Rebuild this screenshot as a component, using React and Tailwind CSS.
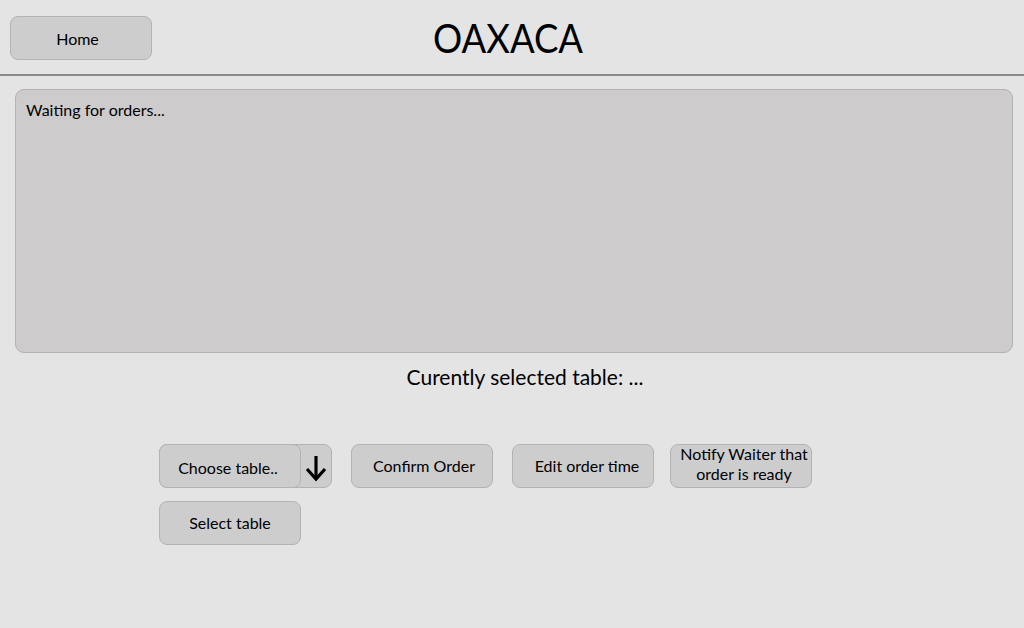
export default function App() {
  const btn =
    'h-[44px] w-[142px] rounded-[8px] border border-[#b3b3b3] bg-[#cecdce] text-[16px] text-black leading-[20px] flex items-center justify-center text-center';

  return (
    <div
      className="w-[1024px] h-[628px] bg-[#e4e4e4] text-black overflow-hidden"
      style={{ fontFamily: 'Lato, "Open Sans", sans-serif' }}
    >
      <header className="relative h-[76px] border-b-2 border-[#8a8a8a]">
        <div className="flex items-start pt-[16px] pl-[10px]">
          <button className={btn + ' pr-[7px] pt-[2px]'}>Home</button>
        </div>
        <h1 className="absolute left-[433px] top-[13px] w-[150px] origin-left scale-x-[0.89] whitespace-nowrap text-[41px] leading-[50px]">
          OAXACA
        </h1>
      </header>

      <main className="px-[15px] pt-[13px]">
        <section className="h-[264px] w-[998px] rounded-[9px] border border-[#b3b3b3] bg-[#cdcbcc] px-[10px] pt-[10px] text-[16px] leading-[20px]">
          Waiting for orders...
        </section>

        <p className="mt-[11px] pl-[26px] text-center text-[21px] leading-[26px]">
          Curently selected table: ...
        </p>

        <div className="mt-[54px] pl-[144px] flex flex-col gap-[13px]">
          <div className="flex items-center gap-[19px]">
            <div className="flex h-[44px] w-[173px] rounded-[8px] border border-[#b3b3b3] bg-[#cecdce]">
              <button className="-m-px h-[44px] w-[142px] rounded-[8px] border border-[#b3b3b3] bg-[#cecdce] text-[16px] pt-[4px] pr-[4px]">
                Choose table..
              </button>
              <div className="flex flex-1 items-center justify-center pt-[4px]">
                <svg width="22" height="28" viewBox="0 0 22 28">
                  <path d="M11 2 V24" stroke="black" strokeWidth="3.2" fill="none" />
                  <path d="M2 15 L11 25 L20 15" stroke="black" strokeWidth="3.2" fill="none" />
                </svg>
              </div>
            </div>
            <button className={btn + ' pl-[4px]'}>Confirm Order</button>
            <button className={btn + ' pl-[8px]'}>Edit order time</button>
            <button className={btn + ' -ml-[3px] pb-[4px] pl-[6px]'}>
              Notify Waiter that
              <br />
              order is ready
            </button>
          </div>
          <div className="flex">
            <button className={btn}>Select table</button>
          </div>
        </div>
      </main>
    </div>
  );
}
